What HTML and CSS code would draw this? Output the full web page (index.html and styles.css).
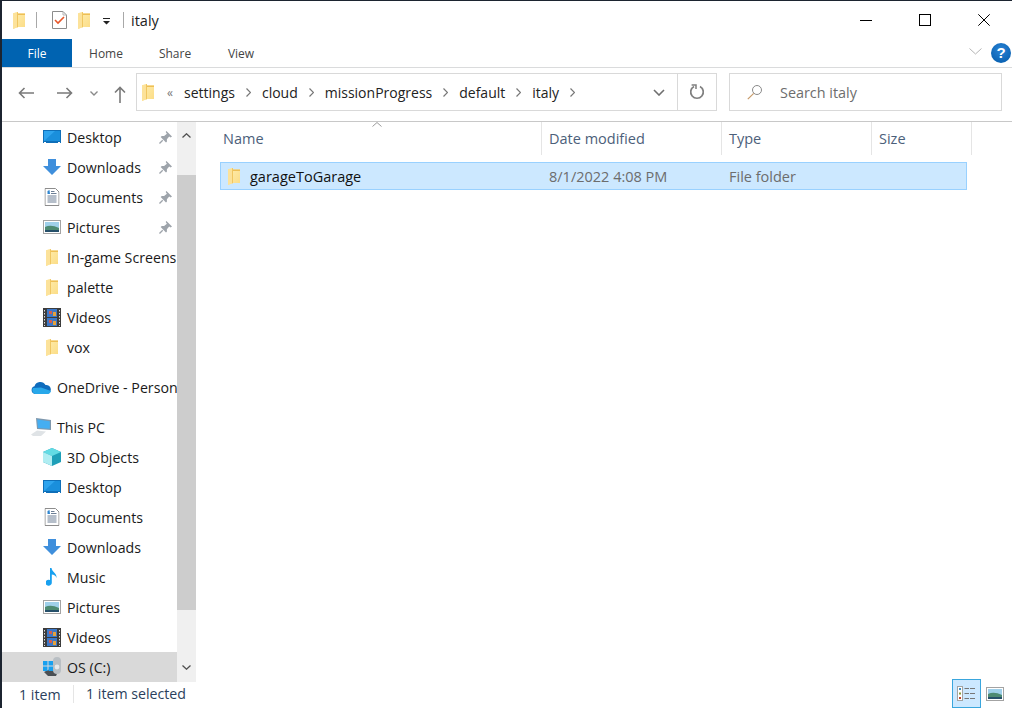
FILE: index.html
```html
<!DOCTYPE html>
<html lang="en">
<head>
<meta charset="utf-8">
<title>italy</title>
<link rel="stylesheet" href="styles.css">
</head>
<body>
<svg class="defs" width="0" height="0" aria-hidden="true">
  <defs>
    <linearGradient id="fg" x1="0" y1="0" x2="1" y2="1">
      <stop offset="0" stop-color="#ffeeb0"/><stop offset="1" stop-color="#fbdc85"/>
    </linearGradient>
    <symbol id="folder" viewBox="0 0 12 17">
      <path d="M0 1.2 L5 0 V1.5 H12 V15 H5 L0 17 Z" fill="url(#fg)"/>
      <path d="M0 1.2 L5 0 V15 L0 17 Z" fill="#fce29a"/>
      <path d="M5 0 V15 L4 15.4 V.3 Z" fill="#f0c661"/>
      <path d="M5 1.5 H12 V3 H5 Z" fill="#eebf55"/>
    </symbol>
    <symbol id="desktop" viewBox="0 0 18 14">
      <rect x="0" y="0" width="18" height="13" fill="#0f6fb8"/>
      <rect x="1" y="1" width="16" height="10" fill="#2ea4ee"/>
      <path d="M1 11 L12 1 H17 V11 Z" fill="#1a8fdc"/>
      <rect x="1" y="12" width="2" height="1" fill="#fff"/><rect x="15" y="12" width="2" height="1" fill="#fff"/>
    </symbol>
    <symbol id="download" viewBox="0 0 18 16">
      <path d="M5 0 H13 V7 H18 L9 16 L0 7 H5 Z" fill="#3f8fdc"/>
    </symbol>
    <symbol id="document" viewBox="0 0 15 18">
      <path d="M.5 .5 H11 L14.5 4 V17.5 H.5 Z" fill="#fff" stroke="#8d8d8d"/>
      <path d="M3 3 L5 2 L5.5 6 H3 Z" fill="#2e86d0"/>
      <path d="M6.5 3.5 H10 M6.5 5.5 H12 M3 8 H12 M3 10 H12 M3 12 H12 M3 14 H12" stroke="#6d7f95" fill="none"/>
    </symbol>
    <symbol id="picture" viewBox="0 0 18 14">
      <rect x=".5" y=".5" width="17" height="13" fill="#fff" stroke="#a3a3a3"/>
      <rect x="2" y="2" width="14" height="10" fill="#9fd0ea"/>
      <path d="M2 7 Q8 4 16 8 V12 H2 Z" fill="#4d8a72"/>
      <path d="M2 10 H16 V12 H2 Z" fill="#26506a"/>
    </symbol>
    <symbol id="video" viewBox="0 0 18 19">
      <rect width="18" height="19" fill="#3c3c3c"/>
      <rect x="4" y="1" width="10" height="8" fill="#3c78c8"/>
      <rect x="4" y="10" width="10" height="8" fill="#3c78c8"/>
      <rect x="6" y="3" width="3" height="3" fill="#d35d4f"/><rect x="10" y="4" width="3" height="4" fill="#e7a13c"/>
      <rect x="6" y="12" width="3" height="3" fill="#d35d4f"/><rect x="10" y="13" width="3" height="4" fill="#e7a13c"/>
      <path d="M1.5 2 V18 M16.5 2 V18" stroke="#ddd" stroke-dasharray="1.5 1.5"/>
    </symbol>
    <symbol id="pin" viewBox="0 0 14 14">
      <path d="M8 0 L14 6 L12.5 7 L11 6 L8.5 9 V11.5 L7.5 12.5 L1.8 6.5 L3 5.5 H5.5 L8.5 3 L7.2 1 Z" fill="#9ea4ab"/>
      <path d="M4 10 L.5 13.5" stroke="#9ea4ab" stroke-width="1.4"/>
    </symbol>
  </defs>
</svg>
<div class="window">
  <header class="titlebar">
    <svg class="ico-folder qa-first"><use href="#folder"/></svg>
    <span class="tsep sep-a"></span>
    <svg class="qa-check" viewBox="0 0 15 18">
      <path d="M.5 .5 H11 L14.5 4 V17.5 H.5 Z" fill="#fff" stroke="#8c8c8c"/>
      <path d="M11 .5 V4 H14.5" fill="none" stroke="#b5b5b5"/>
      <path d="M3 9 L6 12 L12 6" fill="none" stroke="#e8572a" stroke-width="1.6"/>
    </svg>
    <svg class="ico-folder qa-second"><use href="#folder"/></svg>
    <svg class="qa-drop" viewBox="0 0 7 7"><path d="M0 0 H7 V1 H0 Z M0 3 H7 L3.5 6.5 Z" fill="#222"/></svg>
    <span class="tsep sep-b"></span>
    <span class="title-text">italy</span>
    <span class="caption">
      <svg class="cap" viewBox="0 0 12 12"><path d="M0 6.5 H12" stroke="#000" fill="none"/></svg>
      <svg class="cap" viewBox="0 0 12 12"><rect x=".5" y=".5" width="11" height="11" stroke="#000" fill="none"/></svg>
      <svg class="cap" viewBox="0 0 12 12"><path d="M.3 .3 L11.7 11.7 M11.7 .3 L.3 11.7" stroke="#000" fill="none"/></svg>
    </span>
  </header>

  <nav class="ribbon">
    <span class="tab tab-file">File</span>
    <span class="tab tab-home">Home</span>
    <span class="tab tab-share">Share</span>
    <span class="tab tab-view">View</span>
    <svg class="rib-chev" viewBox="0 0 13 7"><path d="M.5 .5 L6.5 6 L12.5 .5" fill="none" stroke="#b5b5b5"/></svg>
    <span class="help">?</span>
  </nav>

  <section class="navbar">
    <svg class="nav-arrow back" viewBox="0 0 16 12"><path d="M16 6 H1.5 M6.5 1 L1.5 6 L6.5 11" fill="none" stroke="#7a7a7a" stroke-width="1.6"/></svg>
    <svg class="nav-arrow forward" viewBox="0 0 16 12"><path d="M0 6 H14.5 M9.5 1 L14.5 6 L9.5 11" fill="none" stroke="#7a7a7a" stroke-width="1.6"/></svg>
    <svg class="nav-down" viewBox="0 0 8 5"><path d="M.5 .5 L4 4 L7.5 .5" fill="none" stroke="#8a8a8a" stroke-width="1.4"/></svg>
    <svg class="nav-up" viewBox="0 0 12 17"><path d="M6 17 V1.5 M1 6.5 L6 1.5 L11 6.5" fill="none" stroke="#7a7a7a" stroke-width="1.6"/></svg>
    <div class="address">
      <svg class="ico-folder addr-folder"><use href="#folder"/></svg>
      <span class="laquo">«</span>
      <span class="crumb">settings</span><svg class="gt" viewBox="0 0 5 9"><path d="M.5 .5 L4.5 4.5 L.5 8.5" fill="none" stroke="#777" stroke-width="1.2"/></svg>
      <span class="crumb">cloud</span><svg class="gt" viewBox="0 0 5 9"><path d="M.5 .5 L4.5 4.5 L.5 8.5" fill="none" stroke="#777" stroke-width="1.2"/></svg>
      <span class="crumb">missionProgress</span><svg class="gt" viewBox="0 0 5 9"><path d="M.5 .5 L4.5 4.5 L.5 8.5" fill="none" stroke="#777" stroke-width="1.2"/></svg>
      <span class="crumb">default</span><svg class="gt" viewBox="0 0 5 9"><path d="M.5 .5 L4.5 4.5 L.5 8.5" fill="none" stroke="#777" stroke-width="1.2"/></svg>
      <span class="crumb">italy</span><svg class="gt" viewBox="0 0 5 9"><path d="M.5 .5 L4.5 4.5 L.5 8.5" fill="none" stroke="#777" stroke-width="1.2"/></svg>
      <span class="addr-end">
        <svg class="addr-chev" viewBox="0 0 12 7"><path d="M1 1 L6 6 L11 1" fill="none" stroke="#6f6f6f" stroke-width="1.6"/></svg>
        <span class="refresh">
          <svg class="refresh-ico" viewBox="0 0 16 16"><path d="M5 2.4 A6.3 6.3 0 1 0 11 2.4" fill="none" stroke="#7f7f7f" stroke-width="1.7"/><path d="M2.6 1 H7 V5" fill="none" stroke="#7f7f7f" stroke-width="1.5"/></svg>
        </span>
      </span>
    </div>
    <div class="search">
      <svg class="search-ico" viewBox="0 0 16 16"><circle cx="10" cy="6" r="4.5" fill="none" stroke="#8a8a8a"/><path d="M6.7 9.3 L.8 15.2" stroke="#c79a6a" stroke-width="1.2"/></svg>
      <span>Search italy</span>
    </div>
  </section>

  <main class="body">
    <aside class="sidebar">
      <div class="tree">
        <div class="row indent"><svg class="ni ni-desktop"><use href="#desktop"/></svg><span class="label">Desktop</span><svg class="pin"><use href="#pin"/></svg></div>
        <div class="row indent"><svg class="ni ni-download"><use href="#download"/></svg><span class="label">Downloads</span><svg class="pin"><use href="#pin"/></svg></div>
        <div class="row indent"><svg class="ni ni-document"><use href="#document"/></svg><span class="label">Documents</span><svg class="pin"><use href="#pin"/></svg></div>
        <div class="row indent"><svg class="ni ni-picture"><use href="#picture"/></svg><span class="label">Pictures</span><svg class="pin"><use href="#pin"/></svg></div>
        <div class="row indent"><svg class="ni ni-folder"><use href="#folder"/></svg><span class="label">In-game Screens</span></div>
        <div class="row indent"><svg class="ni ni-folder"><use href="#folder"/></svg><span class="label">palette</span></div>
        <div class="row indent"><svg class="ni ni-video"><use href="#video"/></svg><span class="label">Videos</span></div>
        <div class="row indent"><svg class="ni ni-folder"><use href="#folder"/></svg><span class="label">vox</span></div>
        <div class="row top gap">
          <svg class="ni ni-cloud" viewBox="0 0 20 13"><path d="M4 13 A4 4 0 0 1 3.5 5.2 A6 6 0 0 1 14.5 4 A4.5 4.5 0 0 1 16 13 Z" fill="#0f6cbd"/><path d="M4 13 A4 4 0 0 1 2 7 L10 6.5 L20 10 A4 4 0 0 1 16 13 Z" fill="#28a8ea"/></svg>
          <span class="label">OneDrive - Person</span>
        </div>
        <div class="row top gap">
          <svg class="ni ni-pc" viewBox="0 0 20 18"><path d="M5 0 L20 2 V12 L6 11 Z" fill="#7f98ad"/><path d="M6.2 1.6 L18.8 3.2 V10.8 L7 10 Z" fill="#45aef2"/><path d="M0 16.5 L6 12.5 L15 13.5 L10 18 H2 Z" fill="#dfe3e6"/></svg>
          <span class="label">This PC</span>
        </div>
        <div class="row indent">
          <svg class="ni ni-3d" viewBox="0 0 18 18"><path d="M9 0 L18 4 V14 L9 18 L0 14 V4 Z" fill="#1e9fb8"/><path d="M9 0 L18 4 L9 8 L0 4 Z" fill="#63dbe4"/><path d="M0 4 L9 8 V18 L0 14 Z" fill="#b0edf2"/></svg>
          <span class="label">3D Objects</span>
        </div>
        <div class="row indent"><svg class="ni ni-desktop"><use href="#desktop"/></svg><span class="label">Desktop</span></div>
        <div class="row indent"><svg class="ni ni-document"><use href="#document"/></svg><span class="label">Documents</span></div>
        <div class="row indent"><svg class="ni ni-download"><use href="#download"/></svg><span class="label">Downloads</span></div>
        <div class="row indent">
          <svg class="ni ni-music" viewBox="0 0 12 18"><path d="M4 0 H5.5 C6 4 11 5 10.5 10 C10 8 8 6.5 5.8 6.5 V14.5 A3.2 3 0 1 1 4 12 Z" fill="#18a0ef"/></svg>
          <span class="label">Music</span>
        </div>
        <div class="row indent"><svg class="ni ni-picture"><use href="#picture"/></svg><span class="label">Pictures</span></div>
        <div class="row indent"><svg class="ni ni-video"><use href="#video"/></svg><span class="label">Videos</span></div>
        <div class="row indent selected">
          <svg class="ni ni-drive" viewBox="0 0 20 22"><path d="M2 16 L8 13 H17 L14 20 H6 Z" fill="#4a4f54"/><rect x="11" y="1" width="8" height="17" rx="4" fill="#b9bfc4"/><circle cx="15" cy="11" r="2.4" fill="#e8eaec"/><rect x="1" y="5" width="4.5" height="4.5" fill="#18a0ef"/><rect x="6.5" y="5" width="4.5" height="4.5" fill="#18a0ef"/><rect x="1" y="10.5" width="4.5" height="4.5" fill="#18a0ef"/><rect x="6.5" y="10.5" width="4.5" height="4.5" fill="#18a0ef"/></svg>
          <span class="label">OS (C:)</span>
        </div>
      </div>
      <div class="scrollbar">
        <div class="sb-btn sb-up"><svg viewBox="0 0 9 5"><path d="M.5 4.5 L4.5 .8 L8.5 4.5" fill="none" stroke="#505050" stroke-width="1.3"/></svg></div>
        <div class="sb-thumb"></div>
        <div class="sb-btn sb-down"><svg viewBox="0 0 9 5"><path d="M.5 .5 L4.5 4.2 L8.5 .5" fill="none" stroke="#505050" stroke-width="1.3"/></svg></div>
      </div>
    </aside>

    <section class="files">
      <div class="cols">
        <svg class="sort" viewBox="0 0 10 5"><path d="M.5 4.5 L5 .5 L9.5 4.5" fill="none" stroke="#9a9a9a"/></svg>
        <div class="col col-name">Name</div>
        <div class="col col-date">Date modified</div>
        <div class="col col-type">Type</div>
        <div class="col col-size">Size</div>
      </div>
      <div class="file">
        <div class="cell cell-name"><svg class="ico-folder"><use href="#folder"/></svg><span>garageToGarage</span></div>
        <div class="cell cell-date">8/1/2022 4:08 PM</div>
        <div class="cell cell-type">File folder</div>
      </div>
    </section>
  </main>

  <footer class="status">
    <span class="st st-count">1 item</span>
    <span class="st st-sel">1 item selected</span>
    <span class="views">
      <span class="view-btn on">
        <svg viewBox="0 0 19 15"><rect x=".5" y=".5" width="5" height="14" fill="#fff" stroke="#a3a3a3"/><rect x="2" y="2" width="2" height="2" fill="#3f8fc0"/><rect x="2" y="6.5" width="2" height="2" fill="#8a9a3a"/><rect x="2" y="11" width="2" height="2" fill="#c0452a"/><path d="M7.5 2.5 H12 M13 2.5 H18 M7.5 7.5 H12 M13 7.5 H18 M7.5 12.5 H12 M13 12.5 H18" stroke="#777"/></svg>
      </span>
      <span class="view-btn"><svg class="view-large"><use href="#picture"/></svg></span>
    </span>
  </footer>
</div>
</body>
</html>
```
FILE: styles.css
```css
* { box-sizing: border-box; }
html, body { margin: 0; padding: 0; background: #fff; }
body { font-family: "Open Sans", "Noto Sans", "Liberation Sans", sans-serif; color: #1a1a1a; overflow: hidden; }
.defs { position: absolute; }
svg { display: block; flex: none; }

.window {
  width: 1012px; height: 708px; display: flex; flex-direction: column;
  border-top: 1px solid #1c2430; border-left: 2px solid #1c2430; background: #fff; overflow: hidden;
}
.ico-folder { width: 12px; height: 17px; }

/* title bar */
.titlebar { height: 38px; display: flex; align-items: center; flex: none; }
.qa-first { margin-left: 11px; }
.tsep { width: 1px; height: 16px; background: #a8a8a8; }
.sep-a { margin-left: 11px; }
.qa-check { width: 15px; height: 18px; margin-left: 15px; }
.qa-second { margin-left: 11px; }
.qa-drop { width: 7px; height: 7px; margin-left: 13px; margin-top: 2px; }
.sep-b { margin-left: 13px; }
.title-text { margin-left: 7px; font-size: 14.5px; color: #222; }
.caption { margin-left: auto; display: flex; margin-right: 22px; gap: 47px; }
.cap { width: 12px; height: 12px; }

/* ribbon */
.ribbon { height: 29px; display: flex; align-items: center; border-bottom: 1px solid #dadbdc; flex: none; position: relative; }
.tab { font-size: 12px; color: #444; display: block; text-align: center; line-height: 30px; height: 28px; }
.tab-file { width: 70px; background: #0063b1; color: #fff; }
.tab-home { width: 68px; }
.tab-share { width: 70px; }
.tab-view { width: 62px; }
.rib-chev { width: 13px; height: 7px; margin-left: auto; margin-top: -3px; }
.help {
  width: 20px; height: 20px; border-radius: 50%; margin: 0 1px 0 9px;
  background: radial-gradient(circle at 50% 35%, #2b84d6, #0058a8);
  color: #fff; font: bold 15px/20px "Liberation Sans", sans-serif; text-align: center;
}

/* nav */
.navbar { height: 54px; display: flex; align-items: center; border-bottom: 1px solid #c8c8c8; flex: none; }
.nav-arrow { width: 16px; height: 12px; margin-top: -4px; }
.back { margin-left: 16px; }
.forward { margin-left: 23px; }
.nav-down { width: 8px; height: 5px; margin-left: 17px; margin-top: -2px; }
.nav-up { width: 12px; height: 17px; margin-left: 16px; margin-top: -1px; }
.address {
  margin-left: 10px; width: 581px; height: 38px; margin-top: -5px;
  border: 1px solid #d9d9d9; display: flex; align-items: center; font-size: 14px; color: #222;
}
.addr-folder { margin-left: 5px; }
.laquo { margin-left: 13px; width: 17px; font-size: 12px; color: #777; }
.crumb { display: block; }
.gt { width: 5px; height: 9px; margin: 0 11px 0 11px; }
.addr-end { margin-left: auto; display: flex; align-items: center; height: 100%; }
.addr-chev { width: 12px; height: 7px; margin-right: 12px; }
.refresh { width: 39px; height: 100%; border-left: 1px solid #d9d9d9; display: flex; align-items: center; justify-content: center; }
.refresh-ico { width: 16px; height: 16px; }
.search {
  margin-left: 12px; width: 273px; height: 38px; margin-top: -5px;
  border: 1px solid #d9d9d9; display: flex; align-items: center;
  font-size: 14.4px; color: #6d6d6d;
}
.search-ico { width: 16px; height: 16px; margin-left: 17px; margin-right: 17px; }

/* main */
.body { flex: 1; display: flex; min-height: 0; }
.sidebar { width: 195px; display: flex; flex: none; }
.tree { width: 175px; overflow: hidden; flex: none; }
.row { height: 30px; display: flex; align-items: center; position: relative; font-size: 14.2px; color: #1a1a1a; white-space: nowrap; }
.row.gap { margin-top: 10px; }
.row.selected { background: #d9d9d9; }
.ni { flex: none; }
.indent .ni { position: absolute; left: 50px; transform: translateX(-50%); }
.indent .label { margin-left: 65px; }
.top .ni { position: absolute; left: 39px; transform: translateX(-50%); }
.top .label { margin-left: 55px; }
.ni-desktop { width: 18px; height: 14px; }
.ni-download { width: 18px; height: 16px; }
.ni-document { width: 15px; height: 18px; }
.ni-picture { width: 18px; height: 14px; }
.ni-video { width: 18px; height: 19px; }
.ni-folder { width: 12px; height: 17px; }
.ni-cloud { width: 20px; height: 13px; }
.ni-pc { width: 20px; height: 18px; }
.ni-3d { width: 18px; height: 18px; }
.ni-music { width: 12px; height: 18px; }
.ni-drive { width: 20px; height: 22px; }
.pin { width: 13px; height: 13px; position: absolute; right: 5px; top: 9px; }
.scrollbar { width: 19px; display: flex; flex-direction: column; background: #f0f0f0; }
.sb-btn { height: 30px; display: flex; align-items: center; justify-content: center; flex: none; }
.sb-btn svg { width: 9px; height: 5px; }
.sb-up { height: 53px; align-items: flex-start; padding-top: 11px; }
.sb-thumb { height: 435px; background: #cdcdcd; flex: none; }
.sb-down { margin-top: auto; }

/* files */
.files { flex: 1; min-width: 0; }
.cols { display: flex; height: 33px; position: relative; margin-left: 23px; width: 753px; font-size: 14.5px; color: #4c607a; }
.col { border-right: 1px solid #e5e5e5; line-height: 33px; height: 33px; padding-left: 7px; }
.col-name { width: 322px; padding-left: 3px; }
.col-date { width: 180px; }
.col-type { width: 150px; }
.col-size { width: 100px; }
.sort { width: 10px; height: 5px; position: absolute; left: 152px; top: 0; }
.file {
  margin: 7px 0 0 23px; width: 747px; height: 28px; background: #cce8ff; border: 1px solid #99d1ff;
  display: flex; align-items: center; font-size: 14.5px; color: #6d6d6d;
}
.cell-name { width: 328px; display: flex; align-items: center; color: #111; }
.cell-name .ico-folder { margin-left: 7px; margin-right: 10px; }
.cell-date { width: 180px; }

/* status */
.status { height: 26px; display: flex; align-items: center; font-size: 14.2px; color: #2b3f5c; flex: none; position: relative; padding-bottom: 2px; }
.st-count { margin-left: 17px; width: 54px; }
.st-sel { padding-left: 12px; border-left: 1px solid #e5e5e5; line-height: 18px; }
.views { margin-left: auto; display: flex; align-items: flex-end; align-self: flex-end; margin-right: 7px; margin-bottom: -2px; }
.view-btn { width: 30px; height: 29px; display: flex; align-items: center; justify-content: center; }
.view-btn.on { background: #cce8ff; border: 1px solid #3aa6dd; width: 29px; margin-right: 4px; }
.view-btn.on svg { width: 19px; height: 15px; }
.view-large { width: 18px; height: 14px; }
.view-btn:last-child { width: 20px; }
```
